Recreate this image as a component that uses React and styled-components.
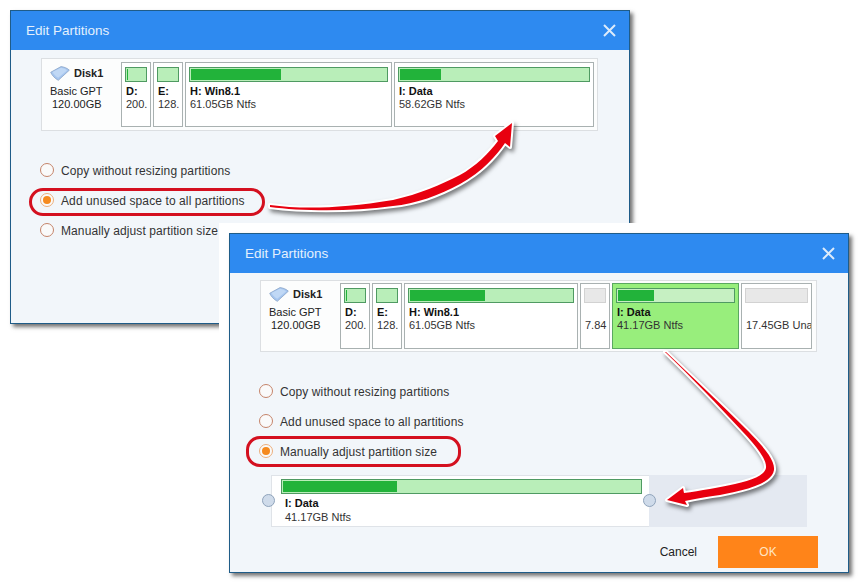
import React from 'react';
import styled, { createGlobalStyle } from 'styled-components';

const GlobalStyle = createGlobalStyle`
  * { box-sizing: border-box; }
  html, body { margin: 0; padding: 0; background: #fff; }
  body { font-family: "Liberation Sans", Arial, sans-serif; color: #222; }
`;

const Desktop = styled.div`
  position: relative;
  width: 861px;
  height: 583px;
  overflow: hidden;
  background: #fff;
`;

const Win = styled.div`
  position: absolute;
  left: ${p => p.$left}px;
  top: ${p => p.$top}px;
  width: ${p => p.$width}px;
  height: ${p => p.$height}px;
  display: flex;
  flex-direction: column;
  background: #f2f6fa;
  border: 1px solid #1f5c88;
  box-shadow: 3px 3px 4px rgba(0, 0, 0, 0.55)${p => (p.$halo ? ', 0 0 0 10px #fff' : '')};
`;

const TitleBar = styled.div`
  flex: none;
  height: 39px;
  display: flex;
  align-items: center;
  justify-content: space-between;
  padding: 0 13px 0 15px;
  background: #2e8af0;
  color: #e4f0fd;
  font-size: 13.5px;
`;

const CloseBtn = styled.svg`
  width: 13px;
  height: 13px;
  stroke: #dcebfb;
  stroke-width: 2;
`;

const DiskPanel = styled.div`
  flex: none;
  display: flex;
  width: 557px;
  height: ${p => p.$height}px;
  margin: ${p => p.$top}px 0 0 30px;
  padding: ${p => p.$padY}px 3px;
  gap: 2px;
  background: #fcfdfd;
  border: 1px solid #dcdfe2;
`;

const DiskInfo = styled.div`
  flex: none;
  width: 74px;
  padding: 3px 0 0 5px;
  font-size: 11px;
  line-height: 13px;
`;

const DiskName = styled.div`
  display: flex;
  align-items: center;
  gap: 4px;
  height: 16px;
  margin-bottom: 4px;
  font-weight: 700;
`;

const DiskLine = styled.div`
  padding-left: ${p => p.$indent || 0}px;
`;

const Partition = styled.div`
  flex: none;
  width: ${p => p.$width}px;
  padding: 4px 3px 0;
  overflow: hidden;
  white-space: nowrap;
  font-size: 11px;
  line-height: 13px;
  background: ${p => (p.$selected ? '#98ee7c' : '#fff')};
  border: 1px solid ${p => (p.$selected ? '#5aa860' : '#a9b1b1')};
`;

const Bar = styled.div`
  height: 15px;
  padding: 1px;
  border: 1px solid ${p => (p.$empty ? '#d2d2d2' : '#4f9a62')};
  background: ${p => (p.$empty ? '#e8e8e8' : p.$selected ? '#c6f0c2' : '#b9eeb9')};
`;

const BarFill = styled.div`
  height: 100%;
  background: #22b33a;
`;

const PartName = styled.div`
  margin-top: 3px;
  padding-left: 1px;
  font-weight: 700;
  color: #111;
`;

const PartSize = styled.div`
  padding-left: 1px;
  color: #333;
`;

const RadioList = styled.div`
  flex: none;
  display: flex;
  flex-direction: column;
  margin: 24px 0 0 29px;
`;

const RadioRow = styled.div`
  height: 30px;
  display: flex;
  align-items: center;
  gap: 7px;
  font-size: 12px;
  letter-spacing: 0.1px;
  color: #333;
`;

const RadioLabel = styled.span`
  padding-top: 2px;
`;

const RadioDot = styled.span`
  flex: none;
  width: 14px;
  height: 14px;
  display: flex;
  align-items: center;
  justify-content: center;
  border-radius: 50%;
  background: #fafafa;
  border: 1px solid ${p => (p.$checked ? '#ecae7c' : '#c5846a')};

  &::after {
    content: '';
    display: ${p => (p.$checked ? 'block' : 'none')};
    width: 8px;
    height: 8px;
    border-radius: 50%;
    background: #f58a1f;
  }
`;

const ResizeTrack = styled.div`
  position: relative;
  flex: none;
  display: flex;
  width: 536px;
  height: 52px;
  margin: 9px 0 0 41px;
  background: #e4e9f1;
`;

const ResizeBox = styled.div`
  width: 378px;
  padding: 3px 7px 0 9px;
  background: #fff;
  border: 1px solid #dfe3e8;
  border-right: none;
  font-size: 11px;
  line-height: 13.5px;
`;

const ResizeName = styled(PartName)`
  margin-top: 3px;
  padding-left: 4px;
`;

const ResizeSize = styled(PartSize)`
  padding-left: 4px;
`;

const Handle = styled.span`
  position: absolute;
  top: 19px;
  left: ${p => p.$left}px;
  width: 13px;
  height: 13px;
  border-radius: 50%;
  background: #cfdbea;
  border: 1px solid #8fa3bb;
`;

const Footer = styled.div`
  flex: none;
  display: flex;
  align-items: center;
  justify-content: flex-end;
  gap: 21px;
  margin-top: 9px;
  padding-right: 30px;
`;

const CancelBtn = styled.span`
  font-size: 12px;
  color: #222;
`;

const OkBtn = styled.span`
  width: 100px;
  height: 32px;
  display: flex;
  align-items: center;
  justify-content: center;
  background: #ff8419;
  color: #ffe6c4;
  font-size: 12px;
`;

const Ring = styled.div`
  position: absolute;
  left: ${p => p.$left}px;
  top: ${p => p.$top}px;
  width: ${p => p.$width}px;
  height: ${p => p.$height}px;
  border: 3px solid #d4101f;
  border-radius: 14px;
`;

const ArrowLayer = styled.svg`
  position: absolute;
  left: 0;
  top: 0;
  width: 861px;
  height: 583px;
  filter: drop-shadow(2px 3px 2px rgba(0, 0, 0, 0.5));
`;

const ArrowBody = styled.path`
  fill: #e8000f;
  stroke: #fff;
  stroke-width: 4;
  stroke-linejoin: round;
  paint-order: stroke;
`;

const DiskIcon = () => (
  <svg width="20" height="15" viewBox="0 0 20 15">
    <path d="M0.7 6.3 L11 0.6 C14 0.9 17.5 2.2 19.3 4.2 L8.3 14.3 C5 12.5 2 9.5 0.7 6.3 Z" fill="#a6c6ef" stroke="#8aa5c8" strokeWidth="0.8" />
    <path d="M2.5 6 L11 1.8 C13.5 2.2 15.8 3.2 17 4.4 L8.2 11.8 C6 10.6 3.8 8.4 2.5 6 Z" fill="#c0d8f5" />
  </svg>
);

const CloseIcon = () => (
  <CloseBtn viewBox="0 0 13 13">
    <path d="M1 1 L12 12 M12 1 L1 12" />
  </CloseBtn>
);

const Disk = ({ height, top, padY, parts }) => (
  <DiskPanel $height={height} $top={top} $padY={padY}>
    <DiskInfo>
      <DiskName><DiskIcon />Disk1</DiskName>
      <DiskLine>Basic GPT</DiskLine>
      <DiskLine $indent={2}>120.00GB</DiskLine>
    </DiskInfo>
    {parts.map((p, i) => (
      <Partition key={i} $width={p.w} $selected={p.selected}>
        <Bar $empty={p.fill === undefined} $selected={p.selected}>
          {p.fill !== undefined && <BarFill style={{ width: `${p.fill}%` }} />}
        </Bar>
        <PartName>{p.name || '\u00a0'}</PartName>
        <PartSize>{p.size}</PartSize>
      </Partition>
    ))}
  </DiskPanel>
);

const Options = ({ checked }) => (
  <RadioList>
    {['Copy without resizing partitions', 'Add unused space to all partitions', 'Manually adjust partition size'].map((t, i) => (
      <RadioRow key={t}>
        <RadioDot $checked={i === checked} />
        <RadioLabel>{t}</RadioLabel>
      </RadioRow>
    ))}
  </RadioList>
);

const before = [
  { w: 30, fill: 8, name: 'D:', size: '200.' },
  { w: 30, fill: 0, name: 'E:', size: '128.' },
  { w: 207, fill: 46, name: 'H: Win8.1', size: '61.05GB Ntfs' },
  { w: 200, fill: 22, name: 'I: Data', size: '58.62GB Ntfs' },
];

const after = [
  { w: 30, fill: 8, name: 'D:', size: '200.' },
  { w: 30, fill: 0, name: 'E:', size: '128.' },
  { w: 174, fill: 46, name: 'H: Win8.1', size: '61.05GB Ntfs' },
  { w: 30, size: '7.84' },
  { w: 127, fill: 31, name: 'I: Data', size: '41.17GB Ntfs', selected: true },
  { w: 71, size: '17.45GB Una' },
];

export default function App() {
  return (
    <Desktop>
      <GlobalStyle />
      <Win $left={10} $top={10} $width={620} $height={314}>
        <TitleBar>Edit Partitions<CloseIcon /></TitleBar>
        <Disk height={73} top={8} padY={3} parts={before} />
        <Options checked={1} />
      </Win>

      <Win $left={229} $top={233} $width={620} $height={340} $halo>
        <TitleBar>Edit Partitions<CloseIcon /></TitleBar>
        <Disk height={72} top={7} padY={2} parts={after} />
        <Options checked={2} />
        <ResizeTrack>
          <ResizeBox>
            <Bar><BarFill style={{ width: '32%' }} /></Bar>
            <ResizeName>I: Data</ResizeName>
            <ResizeSize>41.17GB Ntfs</ResizeSize>
          </ResizeBox>
          <Handle $left={-9} />
          <Handle $left={372} />
        </ResizeTrack>
        <Footer>
          <CancelBtn>Cancel</CancelBtn>
          <OkBtn>OK</OkBtn>
        </Footer>
      </Win>

      <Ring $left={29} $top={188} $width={236} $height={28} />
      <Ring $left={246} $top={436} $width={215} $height={31} />

      <ArrowLayer viewBox="0 0 861 583">
        <ArrowBody d="M270 205 C300 209 340 209 393 200 C420 194 440 185 460 175 C475 167 490 152 498 141 L495 136 L512 123 L510 147 L505 143 C497 155 482 172 460 184 C440 195 415 204 393 206 C350 212 300 211 270 207 Z" />
        <ArrowBody d="M666 352 C690 375 720 403 745 428 C765 448 775 460 774 470 C772 484 745 490 720 495 C705 497 695 499 685 501 L687 505 L667 500 L683 488 L684 493 C700 491 720 487 735 484 C752 480 764 476 766 468 C767 460 758 448 742 431 C720 407 690 376 665 352 Z" />
      </ArrowLayer>
    </Desktop>
  );
}
